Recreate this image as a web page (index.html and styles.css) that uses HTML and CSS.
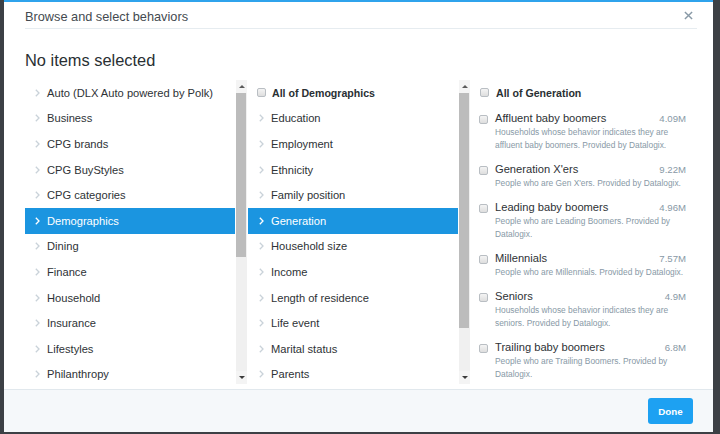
FILE: index.html
```html
<!DOCTYPE html>
<html>
<head>
<meta charset="utf-8">
<link rel="stylesheet" href="styles.css">
</head>
<body>
<div class="modal">
  <div class="modal-header">
    <span class="modal-title">Browse and select behaviors</span>
    <svg class="close" width="10" height="10" viewBox="0 0 10 10"><path d="M1 1L9 9M9 1L1 9" stroke="#8899a6" stroke-width="1.6" fill="none"/></svg>
  </div>
  <h2 class="selected-title">No items selected</h2>
  <div class="columns">
    <div class="col">
      <ul class="list">
        <li class="row"><svg class="chev" viewBox="0 0 5 8"><path d="M0.8 0.8L4 4L0.8 7.2" /></svg>Auto (DLX Auto powered by Polk)</li>
        <li class="row"><svg class="chev" viewBox="0 0 5 8"><path d="M0.8 0.8L4 4L0.8 7.2" /></svg>Business</li>
        <li class="row"><svg class="chev" viewBox="0 0 5 8"><path d="M0.8 0.8L4 4L0.8 7.2" /></svg>CPG brands</li>
        <li class="row"><svg class="chev" viewBox="0 0 5 8"><path d="M0.8 0.8L4 4L0.8 7.2" /></svg>CPG BuyStyles</li>
        <li class="row"><svg class="chev" viewBox="0 0 5 8"><path d="M0.8 0.8L4 4L0.8 7.2" /></svg>CPG categories</li>
        <li class="row active"><svg class="chev" viewBox="0 0 5 8"><path d="M0.8 0.8L4 4L0.8 7.2" /></svg>Demographics</li>
        <li class="row"><svg class="chev" viewBox="0 0 5 8"><path d="M0.8 0.8L4 4L0.8 7.2" /></svg>Dining</li>
        <li class="row"><svg class="chev" viewBox="0 0 5 8"><path d="M0.8 0.8L4 4L0.8 7.2" /></svg>Finance</li>
        <li class="row"><svg class="chev" viewBox="0 0 5 8"><path d="M0.8 0.8L4 4L0.8 7.2" /></svg>Household</li>
        <li class="row"><svg class="chev" viewBox="0 0 5 8"><path d="M0.8 0.8L4 4L0.8 7.2" /></svg>Insurance</li>
        <li class="row"><svg class="chev" viewBox="0 0 5 8"><path d="M0.8 0.8L4 4L0.8 7.2" /></svg>Lifestyles</li>
        <li class="row"><svg class="chev" viewBox="0 0 5 8"><path d="M0.8 0.8L4 4L0.8 7.2" /></svg>Philanthropy</li>
      </ul>
      <div class="sb">
        <div class="sb-btn"><span class="tri-up"></span></div>
        <div class="sb-thumb thumb-a"></div>
        <div class="sb-track"></div>
        <div class="sb-btn"><span class="tri-down"></span></div>
      </div>
    </div>
    <div class="col col2">
      <ul class="list">
        <li class="row all"><span class="cb"></span>All of Demographics</li>
        <li class="row"><svg class="chev" viewBox="0 0 5 8"><path d="M0.8 0.8L4 4L0.8 7.2" /></svg>Education</li>
        <li class="row"><svg class="chev" viewBox="0 0 5 8"><path d="M0.8 0.8L4 4L0.8 7.2" /></svg>Employment</li>
        <li class="row"><svg class="chev" viewBox="0 0 5 8"><path d="M0.8 0.8L4 4L0.8 7.2" /></svg>Ethnicity</li>
        <li class="row"><svg class="chev" viewBox="0 0 5 8"><path d="M0.8 0.8L4 4L0.8 7.2" /></svg>Family position</li>
        <li class="row active"><svg class="chev" viewBox="0 0 5 8"><path d="M0.8 0.8L4 4L0.8 7.2" /></svg>Generation</li>
        <li class="row"><svg class="chev" viewBox="0 0 5 8"><path d="M0.8 0.8L4 4L0.8 7.2" /></svg>Household size</li>
        <li class="row"><svg class="chev" viewBox="0 0 5 8"><path d="M0.8 0.8L4 4L0.8 7.2" /></svg>Income</li>
        <li class="row"><svg class="chev" viewBox="0 0 5 8"><path d="M0.8 0.8L4 4L0.8 7.2" /></svg>Length of residence</li>
        <li class="row"><svg class="chev" viewBox="0 0 5 8"><path d="M0.8 0.8L4 4L0.8 7.2" /></svg>Life event</li>
        <li class="row"><svg class="chev" viewBox="0 0 5 8"><path d="M0.8 0.8L4 4L0.8 7.2" /></svg>Marital status</li>
        <li class="row"><svg class="chev" viewBox="0 0 5 8"><path d="M0.8 0.8L4 4L0.8 7.2" /></svg>Parents</li>
      </ul>
      <div class="sb">
        <div class="sb-btn"><span class="tri-up"></span></div>
        <div class="sb-thumb thumb-b"></div>
        <div class="sb-track"></div>
        <div class="sb-btn"><span class="tri-down"></span></div>
      </div>
    </div>
    <div class="col col3">
      <div class="gen-list">
        <div class="row all all3"><span class="cb"></span>All of Generation</div>
        <div class="gen-item">
          <span class="cb"></span>
          <div class="gen-body">
            <div class="gen-head"><span class="gen-name">Affluent baby boomers</span><span class="gen-size">4.09M</span></div>
            <div class="gen-desc">Households whose behavior indicates they are affluent baby boomers. Provided by Datalogix.</div>
          </div>
        </div>
        <div class="gen-item">
          <span class="cb"></span>
          <div class="gen-body">
            <div class="gen-head"><span class="gen-name">Generation X'ers</span><span class="gen-size">9.22M</span></div>
            <div class="gen-desc">People who are Gen X'ers. Provided by Datalogix.</div>
          </div>
        </div>
        <div class="gen-item">
          <span class="cb"></span>
          <div class="gen-body">
            <div class="gen-head"><span class="gen-name">Leading baby boomers</span><span class="gen-size">4.96M</span></div>
            <div class="gen-desc">People who are Leading Boomers. Provided by Datalogix.</div>
          </div>
        </div>
        <div class="gen-item">
          <span class="cb"></span>
          <div class="gen-body">
            <div class="gen-head"><span class="gen-name">Millennials</span><span class="gen-size">7.57M</span></div>
            <div class="gen-desc">People who are Millennials. Provided by Datalogix.</div>
          </div>
        </div>
        <div class="gen-item">
          <span class="cb"></span>
          <div class="gen-body">
            <div class="gen-head"><span class="gen-name">Seniors</span><span class="gen-size">4.9M</span></div>
            <div class="gen-desc">Households whose behavior indicates they are seniors. Provided by Datalogix.</div>
          </div>
        </div>
        <div class="gen-item">
          <span class="cb"></span>
          <div class="gen-body">
            <div class="gen-head"><span class="gen-name">Trailing baby boomers</span><span class="gen-size">6.8M</span></div>
            <div class="gen-desc">People who are Trailing Boomers. Provided by Datalogix.</div>
          </div>
        </div>
      </div>
    </div>
  </div>
  <div class="modal-footer">
    <button class="done">Done</button>
  </div>
</div>
</body>
</html>
```

FILE: styles.css
```css
html, body {
  margin: 0;
  padding: 0;
}
body {
  width: 720px;
  height: 434px;
  overflow: hidden;
  background: #3c4045;
  box-sizing: border-box;
  padding: 0 7px 2px 4px;
  font-family: "Liberation Sans", Arial, sans-serif;
  color: #333;
}
.modal {
  width: 709px;
  height: 432px;
  box-sizing: border-box;
  background: #fff;
  border-top: 2px solid #2fa3ec;
  display: flex;
  flex-direction: column;
}
.modal-header {
  margin: 0 16px 0 21px;
  height: 27px;
  box-sizing: border-box;
  border-bottom: 1px solid #e6ecf0;
  display: flex;
  align-items: center;
  justify-content: space-between;
}
.modal-title {
  font-size: 12.75px;
  line-height: 15px;
  color: #444a50;
  margin-top: 2px;
}
.close {
  width: 9px;
  height: 9px;
  margin-right: 4px;
  margin-top: 1px;
}
.selected-title {
  margin: 21px 0 0 21px;
  font-size: 16.4px;
  line-height: 20px;
  font-weight: normal;
  color: #292f33;
}
.columns {
  margin: 10px 16px 0 21px;
  height: 304px;
  display: grid;
  grid-template-columns: 222px 222px 1fr;
  column-gap: 1px;
}
.col {
  display: flex;
  overflow: hidden;
}
.list {
  list-style: none;
  margin: 0;
  padding: 0;
  flex: 1;
  overflow: hidden;
}
.row {
  height: 25.6px;
  display: flex;
  align-items: center;
  padding-left: 10px;
  font-size: 11.15px;
  color: #2e3236;
  white-space: nowrap;
}
.chev {
  width: 5px;
  height: 8px;
  margin-right: 7px;
  flex: none;
}
.chev path {
  fill: none;
  stroke: #c9d2d9;
  stroke-width: 1.3;
}
.row.active {
  background: #1b95e0;
  color: #fff;
}
.row.active .chev path {
  stroke: #fff;
}
.row.all {
  font-weight: bold;
  font-size: 10.6px;
  color: #292f33;
  padding-left: 9px;
}
.cb {
  width: 7px;
  height: 7px;
  flex: none;
  border: 1px solid #b9bec3;
  border-radius: 2px;
  background: linear-gradient(#f4f4f4, #dedede);
  box-sizing: content-box;
  margin-right: 6px;
}
.col2 .list .row:not(.all) {
  padding-left: 11px;
}
.sb {
  width: 11px;
  margin-left: 1px;
  background: #f0f0f0;
  display: flex;
  flex-direction: column;
  flex: none;
}
.sb-btn {
  height: 13px;
  display: flex;
  align-items: center;
  justify-content: center;
  background: #f4f4f4;
  flex: none;
}
.tri-up {
  width: 0;
  height: 0;
  border-left: 3px solid transparent;
  border-right: 3px solid transparent;
  border-bottom: 3px solid #5a5a5a;
}
.tri-down {
  width: 0;
  height: 0;
  border-left: 3px solid transparent;
  border-right: 3px solid transparent;
  border-top: 3px solid #3a3a3a;
}
.sb-thumb {
  margin: 0 1px 0 0;
  background: #bcbcbc;
  flex: none;
}
.thumb-a { height: 164px; }
.thumb-b { height: 235px; }
.sb-track { flex: 1; }
.gen-list {
  flex: 1;
  overflow: hidden;
}
.all3 {
  padding-left: 8px;
}
.all3 .cb {
  margin-right: 7px;
}
.gen-item {
  display: flex;
  align-items: flex-start;
  padding: 5px 10px 5px 8px;
}
.gen-item .cb {
  margin-top: 4px;
  margin-right: 7px;
}
.gen-body {
  flex: 1;
}
.gen-head {
  display: flex;
  justify-content: space-between;
  align-items: baseline;
  line-height: 15px;
  margin-right: 1px;
}
.gen-name {
  font-size: 11.15px;
  color: #2e3236;
}
.gen-size {
  font-size: 9.6px;
  color: #8899a6;
}
.gen-desc {
  font-size: 8.4px;
  line-height: 13px;
  color: #8899a6;
}
.modal-footer {
  margin-top: auto;
  height: 43px;
  box-sizing: border-box;
  background: #f5f8fa;
  border-top: 1px solid #e1e8ed;
  display: flex;
  justify-content: flex-end;
  align-items: center;
  padding-right: 20px;
}
.done {
  width: 45px;
  height: 26px;
  border: none;
  border-radius: 3px;
  background: #1da1f2;
  color: #fff;
  font-family: "Liberation Sans", Arial, sans-serif;
  font-weight: bold;
  font-size: 9.8px;
  padding: 0;
}
```
